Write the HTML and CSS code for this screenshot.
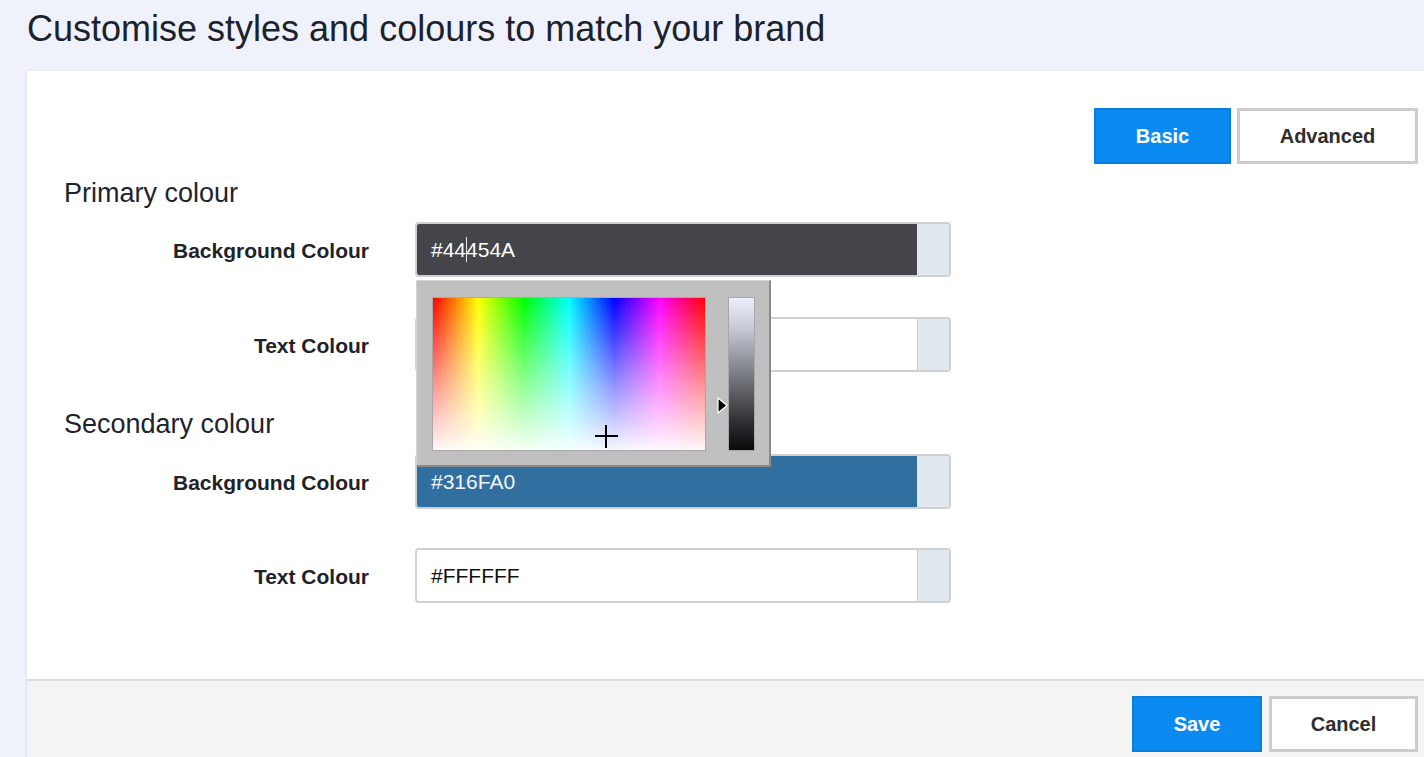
FILE: index.html
```html
<!DOCTYPE html>
<html lang="en">
<head>
<meta charset="utf-8">
<title>Customise styles</title>
<link rel="stylesheet" href="styles.css">
</head>
<body>
<header class="page-header">
  <h1 class="title">Customise styles and colours to match your brand</h1>
</header>
<main class="panel">
  <div class="panel-body">
    <div class="toolbar">
      <button class="btn btn-primary btn-basic">Basic</button>
      <button class="btn btn-default btn-advanced">Advanced</button>
    </div>

    <h2 class="section-title first">Primary colour</h2>
    <div class="form-row row-1">
      <label class="form-label">Background Colour</label>
      <div class="field">
        <div class="color-input">
          <div class="color-value value-dark">#44<span class="caret"></span>454A</div>
          <div class="addon"></div>
        </div>
        <div class="picker">
          <div class="spectrum">
            <span class="cross-h"></span>
            <span class="cross-v"></span>
          </div>
          <div class="slider">
            <svg class="arrow" width="11" height="17" viewBox="0 0 11 17"><polygon points="1,1 10,8.5 1,16" fill="#000" stroke="#fff" stroke-width="1.2"/></svg>
            <div class="lightness"></div>
          </div>
        </div>
      </div>
    </div>
    <div class="form-row row-2">
      <label class="form-label">Text Colour</label>
      <div class="field">
        <div class="color-input">
          <div class="color-value value-light">#FFFFFF</div>
          <div class="addon"></div>
        </div>
      </div>
    </div>

    <h2 class="section-title second">Secondary colour</h2>
    <div class="form-row row-3">
      <label class="form-label">Background Colour</label>
      <div class="field">
        <div class="color-input">
          <div class="color-value value-blue">#316FA0</div>
          <div class="addon"></div>
        </div>
      </div>
    </div>
    <div class="form-row row-4">
      <label class="form-label">Text Colour</label>
      <div class="field">
        <div class="color-input">
          <div class="color-value value-light">#FFFFFF</div>
          <div class="addon"></div>
        </div>
      </div>
    </div>
  </div>
  <footer class="panel-footer">
    <button class="btn btn-primary btn-save">Save</button>
    <button class="btn btn-default btn-cancel">Cancel</button>
  </footer>
</main>
</body>
</html>
```
FILE: styles.css
```css
* { box-sizing: border-box; }

html, body {
  margin: 0;
  padding: 0;
}

body {
  background: #eff2fa;
  font-family: "Liberation Sans", Arial, sans-serif;
  color: #1e232b;
  height: 757px;
  overflow: hidden;
}

.page-header {
  height: 71px;
  padding: 8px 0 0 27px;
}

.title {
  margin: 0;
  font-size: 36px;
  font-weight: normal;
  line-height: 41px;
  color: #1c222d;
}

.panel {
  margin-left: 27px;
  background: #ffffff;
  box-shadow: -1px 0 2px rgba(40, 50, 90, 0.08);
}

.panel-body {
  padding: 37px 6px 76px 37px;
}

.toolbar {
  display: flex;
  justify-content: flex-end;
  gap: 6px;
}

.btn {
  height: 56px;
  font-family: "Liberation Sans", Arial, sans-serif;
  font-size: 20px;
  font-weight: bold;
  cursor: pointer;
  padding: 0;
}

.btn-primary {
  background: #0b8bf2;
  border: 2px solid #0a7edc;
  color: #ffffff;
}

.btn-default {
  background: #ffffff;
  border: 3px solid #cccccc;
  color: #2e2e2e;
}

.btn-basic { width: 137px; }
.btn-advanced { width: 181px; }
.btn-save { width: 130px; }
.btn-cancel { width: 149px; }

.section-title {
  margin: 0;
  font-size: 27px;
  font-weight: normal;
  line-height: 31px;
  color: #1d2430;
}

.section-title.first { margin-top: 14px; }
.section-title.second { margin-top: 37px; }

.form-row {
  display: grid;
  grid-template-columns: 305px 536px;
  column-gap: 46px;
  align-items: center;
}

.row-1 { margin-top: 13px; }
.row-2 { margin-top: 40px; }
.row-3 { margin-top: 14px; }
.row-4 { margin-top: 39px; }

.form-label {
  text-align: right;
  font-size: 21px;
  font-weight: bold;
  color: #1e222a;
  padding-top: 3px;
}

.field {
  position: relative;
}

.color-input {
  display: flex;
  height: 55px;
  border: 2px solid #d0d0d0;
  border-radius: 4px;
  overflow: hidden;
}

.color-value {
  flex: 1;
  display: flex;
  align-items: center;
  padding-left: 14px;
  font-size: 21px;
}

.value-dark { background: #44454a; color: #ffffff; }
.value-blue { background: #316fa0; color: #f2f5f8; }
.value-light { background: #ffffff; color: #111111; }

.caret {
  display: inline-block;
  width: 1px;
  height: 25px;
  background: #e8e8e8;
  margin-right: -1px;
}

.addon {
  width: 32px;
  background: #e1e7ef;
  border-left: 1px solid #cccccc;
}

.value-dark + .addon,
.value-blue + .addon {
  border-left: none;
}

/* colour picker popover */
.picker {
  position: absolute;
  left: 1px;
  top: 58px;
  width: 355px;
  height: 187px;
  z-index: 5;
  display: flex;
  align-items: flex-start;
  padding: 16px 0 0 15px;
  background: #c0c0c0;
  border-top: 1px solid #d4d4d4;
  border-left: 1px solid #d4d4d4;
  border-right: 2px solid #8a8a8a;
  border-bottom: 2px solid #8a8a8a;
}

.spectrum {
  position: relative;
  width: 274px;
  height: 154px;
  border: 1px solid #a8a8a8;
  background:
    linear-gradient(to bottom, rgba(255,255,255,0) 0%, rgba(255,255,255,0.55) 55%, rgba(255,255,255,0.97) 100%),
    linear-gradient(to right, #ff0000 0%, #ffff00 16.6%, #00ff00 33.3%, #00ffff 50%, #0000ff 66.6%, #ff00ff 83.3%, #ff0000 100%);
}

.cross-h {
  position: absolute;
  left: 162px;
  top: 137px;
  width: 23px;
  height: 2px;
  background: #000;
}

.cross-v {
  position: absolute;
  left: 172px;
  top: 127px;
  width: 2px;
  height: 23px;
  background: #000;
}

.slider {
  position: relative;
  margin-left: 22px;
}

.lightness {
  width: 27px;
  height: 154px;
  border: 1px solid #a8a8a8;
  background: linear-gradient(to bottom, #eceefb 0%, #c6c9d6 20%, #94969f 40%, #62646a 60%, #323336 80%, #0a0a0a 100%);
}

.arrow {
  position: absolute;
  left: -11px;
  top: 100px;
}

.panel-footer {
  display: flex;
  justify-content: flex-end;
  gap: 7px;
  height: 90px;
  padding: 15px 6px 0 0;
  background: #f4f4f4;
  border-top: 2px solid #dcdcdc;
}
```
